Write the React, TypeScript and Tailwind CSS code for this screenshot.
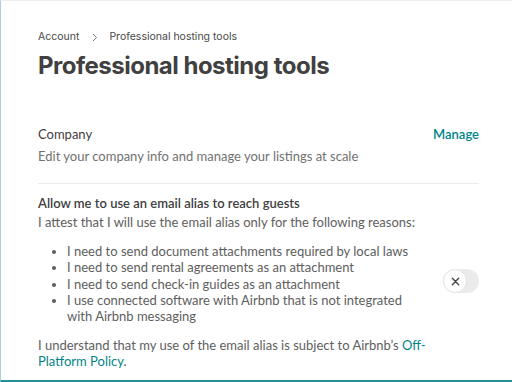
export default function App() {
  const reasons = [
    "I need to send document attachments required by local laws",
    "I need to send rental agreements as an attachment",
    "I need to send check-in guides as an attachment",
    "I use connected software with Airbnb that is not integrated with Airbnb messaging",
  ];

  return (
    <div className="w-[512px] h-[382px] bg-white border-t border-t-[#eeeeee] border-l border-l-[#a8cfdb] border-b-2 border-b-[#23909c] pl-[37px] pr-[33px] font-['Lato',sans-serif] overflow-hidden">
      <div className="pt-[28px] flex items-center text-[10.5px] leading-[16px] text-[#484848] font-['Inter',sans-serif]">
        <span>Account</span>
        <svg className="ml-[13px] mr-[11px]" width="6" height="9" viewBox="0 0 6 9" fill="none" stroke="#767676" strokeWidth="1">
          <path d="M1 1l3.5 3.5L1 8" />
        </svg>
        <span>Professional hosting tools</span>
      </div>
      <h1 className="mt-[7px] text-[24px] leading-[28px] font-bold text-[#404040] tracking-[-0.5px] font-['Inter',sans-serif]">
        Professional hosting tools
      </h1>

      <div className="mt-[43px] flex justify-between items-start">
        <div>
          <p className="text-[13px] leading-[22px] text-[#404040]">Company</p>
          <p className="text-[13px] leading-[22px] text-[#717171]">
            Edit your company info and manage your listings at scale
          </p>
        </div>
        <a className="text-[13px] leading-[22px] font-semibold text-[#008489]">Manage</a>
      </div>

      <div className="mt-[16px] border-t border-[#ebebeb]" />

      <div className="mt-[10px] text-[13px] leading-[19px]">
        <p className="font-semibold text-[#404040]">Allow me to use an email alias to reach guests</p>
        <p className="text-[#5e5e5e]">I attest that I will use the email alias only for the following reasons:</p>
      </div>

      <div className="mt-[11px] flex justify-between">
        <ul className="list-disc pl-[29px] w-[390px] text-[13px] leading-[16.25px] text-[#5e5e5e]">
          {reasons.map((r) => (
            <li key={r}>{r}</li>
          ))}
        </ul>
        <div className="self-start mt-[26px] w-[36px] h-[24px] rounded-full bg-[#ebebeb] relative">
          <div className="absolute left-0 top-0 w-[24px] h-[24px] rounded-full bg-white border border-[#e4e4e4] flex items-center justify-center">
            <svg width="9" height="9" viewBox="0 0 10 10" fill="none" stroke="#484848" strokeWidth="1.6" strokeLinecap="round">
              <path d="M1.5 1.5l7 7M8.5 1.5l-7 7" />
            </svg>
          </div>
        </div>
      </div>

      <p className="mt-[13px] w-[400px] text-[13px] leading-[16px] text-[#5e5e5e]">
        I understand that my use of the email alias is subject to Airbnb’s{" "}
        <a className="text-[#008489]">Off-Platform Policy</a>.
      </p>
    </div>
  );
}
